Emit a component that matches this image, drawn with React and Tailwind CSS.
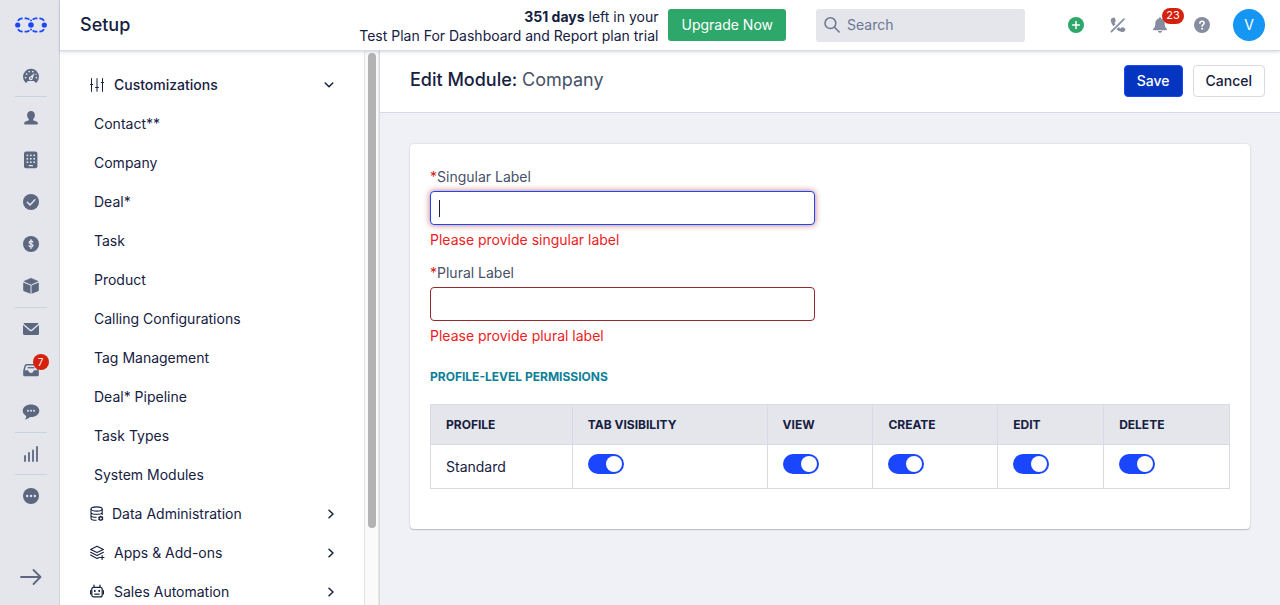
import React from "react";

const DashboardIcon = () => (
  <svg width="18" height="18" viewBox="0 0 18 18" fill="none">
    <path d="M3.4 15.5A8 8 0 1 1 14.6 15.5Q14 16 13.4 15.4L12 14H6L4.6 15.4Q4 16 3.4 15.5Z" fill="currentColor" />
    <g fill="#e5e6ec">
      <circle cx="3.6" cy="10.6" r="0.9" />
      <circle cx="4.6" cy="7.1" r="0.9" />
      <circle cx="7.2" cy="4.6" r="0.9" />
      <circle cx="10.8" cy="4.6" r="0.9" />
      <circle cx="14.4" cy="10.6" r="0.9" />
      <circle cx="14" cy="7.4" r="0.7" />
      <path d="M12.6 6 10.8 11.2A2 2 0 1 1 8.6 9.2Z" />
    </g>
    <circle cx="9" cy="11" r="0.8" fill="currentColor" />
  </svg>
);

const PersonIcon = () => (
  <svg width="16" height="16" viewBox="0 0 16 16" fill="currentColor">
    <path d="M8 1C5.600 1 4.100 2.700 4.100 5 4.100 6.500 4.700 7.900 5.600 8.900 6.100 9.500 6 10.200 5.400 10.500L2.500 11.500C1.700 11.800 1.200 12.500 1.200 13.500 1.200 14.200 1.700 14.600 2.300 14.600H13.700C14.300 14.600 14.800 14.200 14.800 13.500 14.800 12.500 14.300 11.800 13.500 11.500L10.600 10.500C10 10.200 9.900 9.500 10.400 8.900 11.300 7.900 11.900 6.500 11.900 5 11.900 2.700 10.400 1 8 1Z" />
  </svg>
);

const BuildingIcon = () => (
  <svg width="16" height="18" viewBox="0 0 16 18">
    <rect x="1" y="0.600" width="13.400" height="16.600" rx="2" fill="currentColor" />
    <g fill="#e5e6ec">
      <rect x="3.600" y="3.600" width="1.600" height="1.600" />
      <rect x="7" y="3.600" width="1.600" height="1.600" />
      <rect x="10.400" y="3.600" width="1.600" height="1.600" />
      <rect x="3.600" y="7" width="1.600" height="1.600" />
      <rect x="7" y="7" width="1.600" height="1.600" />
      <rect x="10.400" y="7" width="1.600" height="1.600" />
      <rect x="3.600" y="10.400" width="1.600" height="1.600" />
      <rect x="7" y="10.400" width="1.600" height="1.600" />
      <rect x="10.400" y="10.400" width="1.600" height="1.600" />
      <rect x="5.600" y="14" width="4.400" height="1.300" rx="0.500" />
    </g>
  </svg>
);

const CheckIcon = () => (
  <svg width="16" height="16" viewBox="0 0 16 16" fill="none">
    <circle cx="8" cy="8" r="8" fill="currentColor" />
    <path d="M4.300 8.300 7 10.900 11.900 5.700" stroke="#e5e6ec" strokeWidth="1.500" strokeLinecap="round" strokeLinejoin="round" />
  </svg>
);

const DollarIcon = () => (
  <svg width="16" height="16" viewBox="0 0 16 16" fill="none">
    <circle cx="8" cy="8" r="8" fill="currentColor" />
    <path d="M8 3.600V12.400M9.900 6.200C9.700 5.400 9 5 8 5 6.900 5 6.200 5.600 6.200 6.400 6.200 8.300 10 7.500 10 9.500 10 10.400 9.200 11 8 11 6.900 11 6.200 10.500 6 9.700" stroke="#e5e6ec" strokeWidth="1.300" strokeLinecap="round" />
  </svg>
);

const BoxIcon = () => (
  <svg width="18" height="18" viewBox="0 0 18 18" fill="currentColor">
    <path d="M9 1.200 1.900 4.300 9 7.400 16.100 4.300Z" stroke="currentColor" strokeWidth="0.500" strokeLinejoin="round" />
    <path d="M1.200 5.400 8.500 8.500V16.700L2 14.200Q1.200 13.900 1.200 13ZM16.800 5.400 9.500 8.500V16.700L16 14.200Q16.800 13.900 16.800 13Z" />
  </svg>
);

const MailIcon = () => (
  <svg width="16" height="16" viewBox="0 0 16 16" fill="currentColor">
    <path d="M1.300 2H14.700Q15.800 2.100 15.200 2.900L8.700 8.400Q8 9 7.300 8.400L0.800 2.900Q0.200 2.100 1.300 2Z" />
    <path d="M0 4 6.600 9.700Q8 10.800 9.400 9.700L16 4V12.400Q16 13.900 14.500 13.900H1.500Q0 13.900 0 12.400Z" />
  </svg>
);

const InboxIcon = () => (
  <svg width="16" height="16" viewBox="0 0 16 16" fill="none">
    <path d="M1 8.500 2.300 3.700Q2.600 2.700 3.600 2.700H12.400Q13.400 2.700 13.700 3.700L15 8.500" stroke="currentColor" strokeWidth="1.500" />
    <path d="M4.600 5.700H11.400" stroke="currentColor" strokeWidth="1.300" />
    <path d="M0.200 8.200H4.600Q5.300 8.200 5.500 9 6 11 8 11 10 11 10.500 9 10.700 8.200 11.400 8.200H15.800V13Q15.800 14.300 14.500 14.300H1.500Q0.200 14.300 0.200 13Z" fill="currentColor" />
  </svg>
);

const ChatIcon = () => (
  <svg width="18" height="16" viewBox="0 0 18 16">
    <path d="M9 0.500C4.400 0.500 0.700 3.200 0.700 6.800 0.700 8.900 2 10.700 4.100 11.900 4.400 13.200 3.900 14.200 3.100 15.100 2.900 15.400 3 15.700 3.500 15.600 5.500 15.200 7 14.200 7.900 13.100L9 13.100C13.600 13.100 17.300 10.400 17.300 6.800S13.600 0.500 9 0.500Z" fill="currentColor" />
    <g fill="#e5e6ec">
      <circle cx="6" cy="6.800" r="1" />
      <circle cx="9" cy="6.800" r="1" />
      <circle cx="12" cy="6.800" r="1" />
    </g>
  </svg>
);

const BarsIcon = () => (
  <svg width="16" height="16" viewBox="0 0 16 16" stroke="currentColor" strokeWidth="1.800" strokeLinecap="round">
    <path d="M2 15V10M6 15V7M10 15V4.500M14 15V1" />
  </svg>
);

const DotsIcon = () => (
  <svg width="16" height="16" viewBox="0 0 16 16">
    <circle cx="8" cy="8" r="8" fill="currentColor" />
    <g fill="#e5e6ec">
      <circle cx="4.200" cy="8" r="1.200" />
      <circle cx="8" cy="8" r="1.200" />
      <circle cx="11.800" cy="8" r="1.200" />
    </g>
  </svg>
);

const Logo = () => (
  <svg width="32" height="16" viewBox="0 0 32 16" fill="none">
    <g fill="#1a46ff">
      <circle cx="2.700" cy="8" r="2.600" />
      <circle cx="16" cy="8" r="2.800" />
      <circle cx="29.300" cy="8" r="2.600" />
    </g>
    <g stroke="#1a46ff" strokeWidth="1.700">
      <path d="M3 3.800Q4.200 1.400 7.600 1.300M9.600 1.300H11.500Q13 1.300 14.400 2.600M15.100 3.500H16.900M17.600 2.600Q19 1.300 20.500 1.300H22.400M24.400 1.300Q27.800 1.400 29 3.800" />
      <path d="M3 12.200Q4.200 14.600 7.600 14.700M9.600 14.700H11.500Q13 14.700 14.400 13.400M15.100 12.500H16.900M17.600 13.400Q19 14.700 20.500 14.700H22.400M24.400 14.700Q27.800 14.600 29 12.200" />
    </g>
  </svg>
);

const SlidersIcon = () => (
  <svg width="14" height="14" viewBox="0 0 14 14" fill="none" stroke="currentColor" strokeWidth="1" strokeLinecap="round">
    <path d="M1.500 0.600V13.400M7 0.600V13.400M12.500 0.600V13.400M0.500 6.500H2.700M5.600 9.500H8.400M11.300 4.500H13.500" />
  </svg>
);

const DatabaseIcon = () => (
  <svg width="14" height="16" viewBox="0 0 14 16" fill="none" stroke="currentColor" strokeWidth="1.100">
    <ellipse cx="6.600" cy="3" rx="5.600" ry="2.100" />
    <path d="M1 3V12.200C1 13.400 3.400 14.300 6.600 14.300M12.200 3V9M1 6.200C1 7.400 3.500 8.300 6.600 8.300S12.200 7.400 12.200 6.200M1 9.200C1 10.400 3.400 11.300 6.600 11.300" />
    <circle cx="10.800" cy="12.400" r="1.700" strokeWidth="1.400" />
    <path d="M10.800 9.700V10.600M10.800 14.200V15.100M8.500 11.100 9.300 11.500M12.300 13.300 13.100 13.700M8.500 13.700 9.300 13.300M12.300 11.500 13.100 11.100" />
  </svg>
);

const LayersIcon = () => (
  <svg width="16" height="16" viewBox="0 0 16 16" fill="none" stroke="currentColor" strokeWidth="1.100" strokeLinejoin="round" strokeLinecap="round">
    <path d="M7 1.200 0.600 4.400 7 7.600 13.400 4.400ZM0.600 7.200 7 10.500 13.400 7.200M0.600 10.100 7 13.500 9.200 12.400M12.100 10.600V14.400M10.200 12.500H14" />
  </svg>
);

const RobotIcon = () => (
  <svg width="16" height="16" viewBox="0 -0.500 16 16" fill="none" stroke="currentColor" strokeWidth="1.200" strokeLinecap="round">
    <rect x="1.800" y="2.800" width="10.400" height="9.600" rx="2" />
    <path d="M4 2.800V0.600M10 2.800V0.600M0.600 6V9.400M13.400 6V9.400M4.800 9.700H9.200" />
    <path d="M4.800 6.200V6.700M9.200 6.200V6.700" strokeWidth="1.700" />
  </svg>
);

const SearchIcon = () => (
  <svg width="16" height="16" viewBox="0 0 16 16" className="shrink-0" fill="none" stroke="currentColor" strokeWidth="1.500" strokeLinecap="round">
    <circle cx="6.400" cy="6.200" r="5.400" />
    <path d="M10.400 10.200 15.200 15" />
  </svg>
);

const PlusIcon = () => (
  <svg width="16" height="16" viewBox="0 0 16 16" fill="none">
    <circle cx="8" cy="8" r="8" fill="#2ea76a" />
    <path d="M8 4.600V11.400M4.600 8H11.400" stroke="#fff" strokeWidth="1.500" strokeLinecap="round" />
  </svg>
);

const PhoneOffIcon = () => (
  <svg width="16" height="16" viewBox="0 0 16 16" fill="none">
    <path d="M3.800 0.600 2.500 1C1 1.500 0.500 2.800 0.900 4.300 1.300 6.100 2.200 7.800 3.400 9.300L5.500 7.200 4.500 5.700 5.500 4.600Q6 4 5.600 3.200L4.900 1.300Q4.600 0.500 3.800 0.600ZM8.400 10.300 6.400 12.300C8 13.700 9.900 14.600 11.800 15 13.400 15.300 14.600 14.600 15.100 13.300L15.400 12.300Q15.600 11.500 14.800 11.200L12.900 10.300Q12.200 10 11.600 10.600L10.600 11.500Z" fill="currentColor" />
    <path d="M1.400 14.700 14 2.200" stroke="currentColor" strokeWidth="1.700" strokeLinecap="round" />
  </svg>
);

const BellIcon = () => (
  <svg width="16" height="16" viewBox="0 0 16 16" fill="currentColor">
    <path d="M8 0.300C7.300 0.300 7 0.800 7 1.400 4.600 1.900 3.400 3.700 3.300 6.100L3.100 9C3 10.300 2 10.800 1.300 11.700 0.800 12.400 1.100 13.200 1.900 13.200H14.100C14.900 13.200 15.200 12.400 14.700 11.700 14 10.800 13 10.300 12.900 9L12.700 6.100C12.600 3.700 11.400 1.900 9 1.400 9 0.800 8.700 0.300 8 0.300ZM5.900 13.900H10.100C9.800 15.100 9 15.700 8 15.700S6.200 15.100 5.900 13.900Z" />
  </svg>
);

const HelpIcon = () => (
  <svg width="16" height="16" viewBox="0 0 16 16" fill="none">
    <circle cx="8" cy="8" r="8" fill="currentColor" />
    <path d="M5.900 6.300C5.900 5 6.800 4.200 8 4.200S10.200 5 10.200 6.100C10.200 7.600 8.100 7.600 8.100 9.300" stroke="#fff" strokeWidth="1.500" strokeLinecap="round" />
    <circle cx="8.100" cy="11.700" r="1" fill="#fff" />
  </svg>
);

const ChevronRight = () => (
  <svg width="8" height="10" viewBox="0 0 8 10" fill="none" stroke="currentColor" strokeWidth="1.500" strokeLinecap="round" strokeLinejoin="round">
    <path d="M2 1.200 6 5 2 8.800" />
  </svg>
);

const ChevronDown = () => (
  <svg width="10" height="8" viewBox="0 0 10 8" fill="none" stroke="currentColor" strokeWidth="1.500" strokeLinecap="round" strokeLinejoin="round">
    <path d="M1.200 2 5 5.800 8.800 2" />
  </svg>
);

const railItems = [
  { name: "Dashboard", Icon: DashboardIcon, below: true },
  { name: "Contacts", Icon: PersonIcon },
  { name: "Companies", Icon: BuildingIcon },
  { name: "Tasks", Icon: CheckIcon },
  { name: "Deals", Icon: DollarIcon },
  { name: "Products", Icon: BoxIcon },
  { name: "Mail", Icon: MailIcon, above: true },
  { name: "Inbox", Icon: InboxIcon, badge: 7 },
  { name: "Chat", Icon: ChatIcon, below: true },
  { name: "Reports", Icon: BarsIcon, below: true },
  { name: "More", Icon: DotsIcon },
];

const modules = [
  "Contact**",
  "Company",
  "Deal*",
  "Task",
  "Product",
  "Calling Configurations",
  "Tag Management",
  "Deal* Pipeline",
  "Task Types",
  "System Modules",
];

const sections = [
  { name: "Data Administration", Icon: DatabaseIcon },
  { name: "Apps & Add-ons", Icon: LayersIcon },
  { name: "Sales Automation", Icon: RobotIcon },
];

const permissions = ["Tab Visibility", "View", "Create", "Edit", "Delete"];

function Rail() {
  return (
    <nav aria-label="Main" className="flex w-15 shrink-0 flex-col items-center border-r border-[#cfd2e0] bg-[#e5e6ec] pl-0.5 text-[#5c6780]">
      <a href="#home" aria-label="Home" className="flex h-[50px] items-center">
        <Logo />
      </a>
      <ul className="mt-[5px]">
        {railItems.map(({ name, Icon, above, below, badge }) => (
          <li
            key={name}
            className={
              "h-[42px] w-8 border-[#c9d1e2] " + (above ? "border-t" : below ? "border-b" : "")
            }
          >
            <a href={"#" + name.toLowerCase()} aria-label={name} className="relative flex h-full items-center justify-center">
              <Icon />
              {badge && (
                <span className="absolute -right-0.5 top-[5px] flex size-4 items-center justify-center rounded-full bg-[#d4200c] text-[10px] text-white">
                  {badge}
                </span>
              )}
            </a>
          </li>
        ))}
      </ul>
      <button type="button" aria-label="Expand" className="mt-auto mb-4 flex h-6 items-center">
        <svg width="22" height="18" viewBox="0 0 22 18" fill="none" stroke="currentColor" strokeWidth="1.800" strokeLinecap="round" strokeLinejoin="round">
          <path d="M1 9H20.500M13.500 2 20.500 9 13.500 16" />
        </svg>
      </button>
    </nav>
  );
}

function Header() {
  return (
    <header className="relative z-10 flex h-[51px] shrink-0 items-center border-b border-[#d8dae5] bg-white pr-[15px] pl-5 shadow-[0_1px_3px_rgba(90,100,150,0.25)]">
      <h1 className="text-lg font-medium">Setup</h1>
      <p className="ml-auto pt-0.5 text-right leading-[19px]">
        <b className="font-bold">351 days</b> left in your
        <br />
        Test Plan For Dashboard and Report plan trial
      </p>
      <button type="button" className="ml-2.5 h-8 rounded-[3px] bg-[#2ea76a] px-[13px] text-white">
        Upgrade Now
      </button>
      <label className="ml-[30px] flex h-[33px] w-[209px] items-center gap-[7px] rounded-[3px] bg-[#e5e6ec] px-2 text-[#6b7690]">
        <SearchIcon />
        <input type="search" placeholder="Search" aria-label="Search" className="w-full min-w-0 bg-transparent outline-none placeholder:text-[#6b7690]" />
      </label>
      <div className="ml-[30px] flex items-center text-[#858d9f]">
        <button type="button" aria-label="Add" className="flex h-8 w-[42px] items-center justify-center">
          <PlusIcon />
        </button>
        <button type="button" aria-label="Calls off" className="flex h-8 w-[42px] items-center justify-center">
          <PhoneOffIcon />
        </button>
        <button type="button" aria-label="Notifications" className="relative flex h-8 w-[42px] items-center justify-center">
          <BellIcon />
          <span className="absolute -top-px -right-[3px] flex h-4 w-[22px] items-center justify-center rounded-full bg-[#d4200c] text-[11px] text-white">
            23
          </span>
        </button>
        <button type="button" aria-label="Help" className="flex h-8 w-[42px] items-center justify-center">
          <HelpIcon />
        </button>
      </div>
      <button type="button" aria-label="Account" className="ml-2.5 size-8 rounded-full bg-[#1496f2] text-white">
        V
      </button>
    </header>
  );
}

function Sidebar() {
  return (
    <aside className="flex w-[320px] shrink-0 overflow-hidden border-r border-[#d8dae0] bg-white">
      <nav aria-label="Setup" className="min-w-0 flex-1 pt-3.5 pr-[29px] pl-[30px]">
        <button type="button" className="flex h-[39px] w-full items-center gap-2.5 text-left font-medium">
          <SlidersIcon />
          <span className="flex-1">Customizations</span>
          <span className="pr-px">
            <ChevronDown />
          </span>
        </button>
        <ul>
          {modules.map((name) => (
            <li key={name}>
              <a href="#module" className="flex h-[39px] items-center pl-1">
                {name}
              </a>
            </li>
          ))}
        </ul>
        {sections.map(({ name, Icon }) => (
          <button key={name} type="button" className="flex h-[39px] w-full items-center gap-2 text-left">
            <Icon />
            <span className="flex-1">{name}</span>
            <ChevronRight />
          </button>
        ))}
      </nav>
      <div className="flex w-[15px] shrink-0 justify-center border-x border-[#e6e6e8] bg-[#fafafa] pt-0.5" aria-hidden="true">
        <div className="h-[86%] w-2 rounded-full bg-[#b3b3b3]" />
      </div>
    </aside>
  );
}

function Field({ id, label, error, focused }) {
  return (
    <div className="mb-3.5">
      <label htmlFor={id} className="block leading-5 text-[#475069]">
        <span className="text-[#d4200c]">*</span>
        {label}
      </label>
      <div className="relative mt-1">
        <input
          id={id}
          type="text"
          aria-invalid="true"
          aria-describedby={id + "-error"}
          className={
            "block h-[34px] w-full rounded-[4px] border bg-white px-2 outline-none " +
            (focused
              ? "border-[#1a46ff] caret-transparent shadow-[0_0_6px_rgba(170,30,30,0.65)]"
              : "border-[#96292d]")
          }
        />
        {focused && <span className="absolute top-[9px] left-[9px] h-[17px] w-px bg-[#16203f]" />}
      </div>
      <p id={id + "-error"} className="pt-[5px] leading-[19px] text-[#ee1c25]">
        {error}
      </p>
    </div>
  );
}

function PermissionsTable() {
  return (
    <table className="w-full table-fixed border-collapse border border-[#d8dae5] text-left">
      <colgroup>
        <col className="w-[17.75%]" />
        <col className="w-[24.375%]" />
        <col className="w-[13.25%]" />
        <col className="w-[15.625%]" />
        <col className="w-[13.25%]" />
        <col />
      </colgroup>
      <thead className="bg-[#e5e6ec] text-xs uppercase">
        <tr className="h-10">
          {["Profile", ...permissions].map((name) => (
            <th key={name} scope="col" className="border border-[#d8dae5] px-[15px] font-bold">
              {name}
            </th>
          ))}
        </tr>
      </thead>
      <tbody>
        <tr className="h-11">
          <td className="border border-[#d8dae5] px-[15px]">Standard</td>
          {permissions.map((name) => (
            <td key={name} className="border border-[#d8dae5] px-[15px] pb-[5px]">
              <input
                type="checkbox"
                role="switch"
                defaultChecked
                aria-label={"Standard: " + name}
                className="flex h-5 w-9 appearance-none items-center rounded-full bg-[#9aa1b2] px-0.5 before:size-4 before:rounded-full before:bg-white before:content-[''] checked:justify-end checked:bg-[#1a46ff]"
              />
            </td>
          ))}
        </tr>
      </tbody>
    </table>
  );
}

export default function App() {
  return (
    <div className="flex h-screen overflow-hidden bg-[#f0f1f6] font-['Inter',sans-serif] text-sm text-[#16203f]">
      <Rail />
      <div className="flex min-w-0 flex-1 flex-col">
        <Header />
        <div className="flex min-h-0 flex-1">
          <Sidebar />
          <main className="min-w-0 flex-1">
            <div className="flex h-[62px] items-center gap-2.5 border-b border-[#d8dae5] bg-white pr-[15px] pb-0.5 pl-[30px]">
              <h2 className="mr-auto pb-0.5 text-lg font-medium">
                Edit Module: <span className="font-normal text-[#475069]">Company</span>
              </h2>
              <button type="button" className="h-8 rounded-[4px] border border-[#1a46ff] bg-[#0435c0] px-3 font-medium text-white">
                Save
              </button>
              <button type="button" className="h-8 rounded-[4px] border border-[#d8dae5] bg-white px-3 font-medium">
                Cancel
              </button>
            </div>
            <form className="mx-[30px] mt-[31px] rounded-[4px] bg-white px-5 pt-[23px] pb-10 shadow-[0_0_2px_rgba(80,95,120,0.25),0_1px_1px_rgba(80,95,120,0.3)]">
              <div className="grid grid-cols-2 gap-x-[30px]">
                <div>
                  <Field id="singular" label="Singular Label" error="Please provide singular label" focused />
                  <Field id="plural" label="Plural Label" error="Please provide plural label" />
                </div>
              </div>
              <h3 className="mt-2 mb-[17px] text-xs leading-5 font-bold text-[#0e7f99] uppercase">Profile-level permissions</h3>
              <PermissionsTable />
            </form>
          </main>
        </div>
      </div>
    </div>
  );
}
